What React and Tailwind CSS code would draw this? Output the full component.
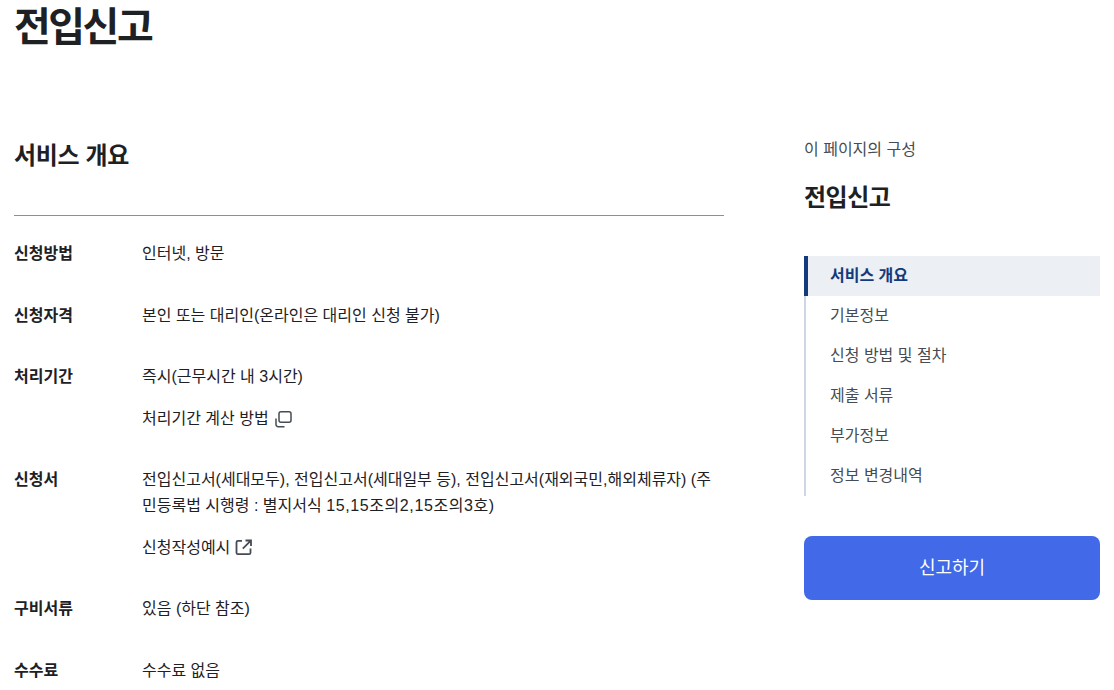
const Row = ({ label, children }) => (
  <div className="flex mb-[36px]">
    <div className="w-[128px] shrink-0 font-bold text-[#1e2124]">{label}</div>
    <div className="flex-1 text-[#1e2124]">{children}</div>
  </div>
);
const Copy = () => (
  <svg width="20" height="20" viewBox="0 0 20 20" fill="none" stroke="#464c53" strokeWidth="1.5" className="ml-1">
    <rect x="6" y="2.75" width="12" height="10.5" rx="2" />
    <path d="M3 9.5v6a2.2 2.2 0 0 0 2.2 2.2H11.5" />
  </svg>
);
const Ext = () => (
  <svg width="20" height="20" viewBox="0 0 20 20" fill="none" stroke="#464c53" strokeWidth="1.8" className="ml-[3px]">
    <path d="M9 3.8H5a1.5 1.5 0 0 0-1.5 1.5v10.4A1.5 1.5 0 0 0 5 17.2h11a1.5 1.5 0 0 0 1.5-1.5V11.5" />
    <path d="M12.5 3.5h5.5V9M17.8 3.7L9.8 11.7" />
  </svg>
);
export default function App() {
  const items = ["기본정보", "신청 방법 및 절차", "제출 서류", "부가정보", "정보 변경내역"];
  return (
    <div className="h-[690px] overflow-hidden bg-white px-[14px] text-[16px] leading-[25.6px] text-[#1e2124] font-['Liberation_Sans','Noto_Sans_CJK_KR',sans-serif]">
      <h1 className="pt-[3px] text-[40px] leading-[48px] font-bold tracking-[-2.5px] text-[#1e2124]">전입신고</h1>
      <div className="flex mt-[86px]">
        <div className="w-[710px] shrink-0">
          <h2 className="pt-[1px] text-[24px] leading-[36px] font-bold tracking-[-0.35px] border-b border-[#8f8f8f] pb-[41px] mb-[25px]">서비스 개요</h2>
          <Row label="신청방법">인터넷, 방문</Row>
          <Row label="신청자격">본인 또는 대리인(온라인은 대리인 신청 불가)</Row>
          <Row label="처리기간">
            <div>즉시(근무시간 내 3시간)</div>
            <div className="flex items-center mt-[16px]">처리기간 계산 방법<Copy /></div>
          </Row>
          <Row label="신청서">
            <div>전입신고서(세대모두), 전입신고서(세대일부 등), 전입신고서(재외국민,해외체류자) (주민등록법 시행령 : 별지서식 <span className="tracking-[0.6px]">15,15조의2,15조의3호)</span></div>
            <div className="flex items-center mt-[16px]">신청작성예시<Ext /></div>
          </Row>
          <Row label="구비서류">있음 (하단 참조)</Row>
          <Row label="수수료">수수료 없음</Row>
        </div>
        <div className="w-[296px] ml-[80px] shrink-0">
          <div className="text-[#464c53] h-[26px]">이 페이지의 구성</div>
          <div className="text-[24px] leading-[36px] font-bold tracking-[-0.5px] mt-[17px]">전입신고</div>
          <nav className="mt-[40px] border-l-2 border-[#cdd6e4]">
            <div className="-ml-[2px] border-l-4 border-[#133a7c] bg-[#eceff4] h-10 pl-[22px] flex items-center font-bold text-[#133a7c]">서비스 개요</div>
            {items.map((t) => (
              <div key={t} className="h-10 pl-6 flex items-center text-[#464c53]">{t}</div>
            ))}
          </nav>
          <div className="mt-[40px] h-16 rounded-lg bg-[#4169e8] text-white text-[18px] flex items-center justify-center pt-[1px]">신고하기</div>
        </div>
      </div>
    </div>
  );
}
